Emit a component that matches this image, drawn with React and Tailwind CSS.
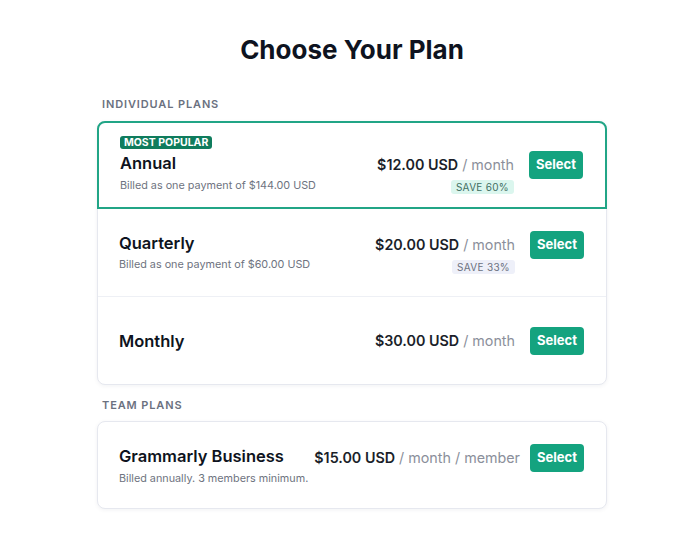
import React from "react";

function SelectBtn() {
  return (
    <button className="h-[28px] w-[54px] shrink-0 rounded-[4px] bg-[#14a37f] text-[13px] font-bold text-white flex items-center justify-center">
      Select
    </button>
  );
}

function Price({ amount, unit, badge, badgeClass }) {
  return (
    <div className="flex flex-col items-end">
      <div className="h-[28px] flex items-center text-[14.3px] whitespace-nowrap">
        <span className="font-semibold text-[#1b1f2a]">{amount}</span>
        <span className="text-[#8b8f9b]">&nbsp;{unit}</span>
      </div>
      {badge && (
        <span className={"mt-[1px] h-[14px] leading-[14px] px-[5px] rounded-[3px] text-[10px] font-normal tracking-[0.03em] whitespace-nowrap " + badgeClass}>
          {badge}
        </span>
      )}
    </div>
  );
}

export default function App() {
  return (
    <div className="min-h-screen bg-white font-['Inter','Noto_Sans',sans-serif] pt-[33px] pb-[26px]">
      <div className="ml-[97px] w-[510px]">
        <h1 className="text-center text-[26px] leading-[33px] font-bold text-[#0e1320]">Choose Your Plan</h1>

        <div className="mt-[30px] ml-[5px] text-[11px] leading-[16px] font-semibold tracking-[0.08em] text-[#6b7180]">
          INDIVIDUAL PLANS
        </div>

        <div className="mt-[9px] rounded-[8px] border border-[#e6e8ef] bg-white shadow-[0_1px_4px_rgba(20,30,60,0.06)]">
          {/* Annual */}
          <div className="-mx-px -mt-px h-[88px] rounded-t-[8px] border-2 border-[#21a586] pl-[21px] pr-[22px] flex items-center justify-between">
            <div className="flex flex-col items-start">
              <span className="h-[13px] leading-[13px] px-[4px] rounded-[3px] bg-[#0f7c5d] text-white text-[10.5px] font-bold whitespace-nowrap">
                MOST POPULAR
              </span>
              <div className="mt-[3px] text-[16.5px] leading-[22px] font-semibold text-[#0e1320]">Annual</div>
              <div className="mt-[4px] text-[10.8px] leading-[16px] text-[#6e7380] whitespace-nowrap">Billed as one payment of $144.00 USD</div>
            </div>
            <div className="pt-[14px] flex items-start gap-[15px]">
              <Price amount="$12.00 USD" unit="/ month" badge="SAVE 60%" badgeClass="bg-[#dbf6ee] text-[#3f6e62]" />
              <SelectBtn />
            </div>
          </div>

          {/* Quarterly */}
          <div className="h-[88px] border-b border-[#eef0f5] pl-[21px] pr-[22px] flex items-center justify-between">
            <div className="flex flex-col items-start">
              <div className="text-[16.5px] leading-[22px] font-semibold text-[#0e1320]">Quarterly</div>
              <div className="mt-[3px] text-[10.8px] leading-[16px] text-[#6e7380] whitespace-nowrap">Billed as one payment of $60.00 USD</div>
            </div>
            <div className="flex items-start gap-[15px]">
              <Price amount="$20.00 USD" unit="/ month" badge="SAVE 33%" badgeClass="bg-[#eef0f9] text-[#6b7180]" />
              <SelectBtn />
            </div>
          </div>

          {/* Monthly */}
          <div className="h-[87px] pl-[21px] pr-[22px] flex items-center justify-between">
            <div className="text-[16.5px] leading-[22px] font-semibold text-[#0e1320]">Monthly</div>
            <div className="flex items-start gap-[15px]">
              <Price amount="$30.00 USD" unit="/ month" />
              <SelectBtn />
            </div>
          </div>
        </div>

        <div className="mt-[12px] ml-[5px] text-[11px] leading-[16px] font-semibold tracking-[0.08em] text-[#6b7180]">
          TEAM PLANS
        </div>

        <div className="mt-[8px] h-[88px] rounded-[8px] border border-[#e6e8ef] bg-white shadow-[0_1px_4px_rgba(20,30,60,0.06)] pl-[21px] pr-[22px] flex items-center justify-between">
          <div className="pt-[2px] flex flex-col items-start">
            <div className="text-[16.5px] leading-[22px] font-semibold text-[#0e1320] whitespace-nowrap">Grammarly Business</div>
            <div className="mt-[4px] text-[10.8px] leading-[16px] text-[#6e7380] whitespace-nowrap">Billed annually. 3 members minimum.</div>
          </div>
          <div className="pb-[14px] flex items-start gap-[10px]">
            <Price amount="$15.00 USD" unit="/ month / member" />
            <SelectBtn />
          </div>
        </div>
      </div>
    </div>
  );
}
